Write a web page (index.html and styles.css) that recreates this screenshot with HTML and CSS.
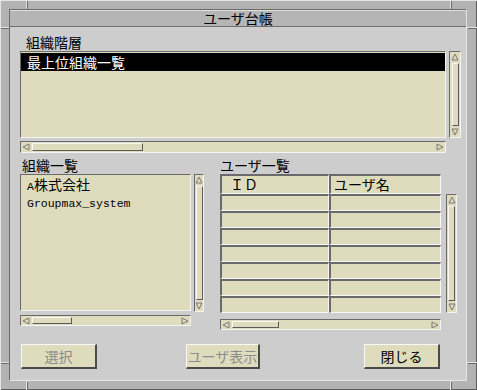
FILE: index.html
```html
<!DOCTYPE html>
<html lang="ja">
<head>
    <meta charset="UTF-8">
    <title>ユーザ台帳</title>
    <link rel="stylesheet" href="styles.css">
</head>
<body>
    <div class="window">
        <div class="notch n-top-l"></div>
        <div class="notch n-top-r"></div>
        <div class="notch n-bot-l"></div>
        <div class="notch n-bot-r"></div>
        <div class="notch n-left-t"></div>
        <div class="notch n-left-b"></div>
        <div class="notch n-right-t"></div>
        <div class="notch n-right-b"></div>
        <div class="inner">
            <div class="titlebar">ユーザ台帳</div>
            <div class="content">
                <!--組織階層-->
                <div class="label label-tree">組織階層</div>
                <div class="pane">
                    <div class="list list-tree">
                        <div class="item selected">最上位組織一覧</div>
                    </div>
                    <div class="vscroll vs-tree">
                        <svg class="arr up" viewBox="0 0 8 8"><path d="M4 1 L7 7 L1 7 Z"/></svg>
                        <div class="vthumb"></div>
                        <svg class="arr down" viewBox="0 0 8 8"><path d="M4 1 L7 7 L1 7 Z"/></svg>
                    </div>
                </div>
                <div class="hscroll hs-tree">
                    <svg class="arr left" viewBox="0 0 8 8"><path d="M4 1 L7 7 L1 7 Z"/></svg>
                    <div class="track"><div class="hthumb" style="width: 111px"></div></div>
                    <svg class="arr right" viewBox="0 0 8 8"><path d="M4 1 L7 7 L1 7 Z"/></svg>
                </div>

                <div class="columns">
                    <!--組織一覧-->
                    <div class="col col-org">
                        <div class="label label-org">組織一覧</div>
                        <div class="pane">
                            <div class="list list-org">
                                <div class="item"><span class="latin">A</span>株式会社</div>
                                <div class="item"><span class="latin">Groupmax_system</span></div>
                            </div>
                            <div class="vscroll vs-org">
                                <svg class="arr up" viewBox="0 0 8 8"><path d="M4 1 L7 7 L1 7 Z"/></svg>
                                <div class="vthumb"></div>
                                <svg class="arr down" viewBox="0 0 8 8"><path d="M4 1 L7 7 L1 7 Z"/></svg>
                            </div>
                        </div>
                        <div class="hscroll hs-org">
                            <svg class="arr left" viewBox="0 0 8 8"><path d="M4 1 L7 7 L1 7 Z"/></svg>
                            <div class="track"><div class="hthumb" style="width: 40px"></div></div>
                            <svg class="arr right" viewBox="0 0 8 8"><path d="M4 1 L7 7 L1 7 Z"/></svg>
                        </div>
                    </div>

                    <!--ユーザ一覧-->
                    <div class="col col-user">
                        <div class="label">ユーザ一覧</div>
                        <div class="pane">
                            <div class="table">
                                <div class="cell head c-id">ＩＤ</div>
                                <div class="cell head c-name">ユーザ名</div>
                                <div class="cell c-id"></div><div class="cell c-name"></div>
                                <div class="cell c-id"></div><div class="cell c-name"></div>
                                <div class="cell c-id"></div><div class="cell c-name"></div>
                                <div class="cell c-id"></div><div class="cell c-name"></div>
                                <div class="cell c-id"></div><div class="cell c-name"></div>
                                <div class="cell c-id"></div><div class="cell c-name"></div>
                                <div class="cell c-id"></div><div class="cell c-name"></div>
                            </div>
                            <div class="vscroll vs-user">
                                <svg class="arr up" viewBox="0 0 8 8"><path d="M4 1 L7 7 L1 7 Z"/></svg>
                                <div class="vthumb"></div>
                                <svg class="arr down" viewBox="0 0 8 8"><path d="M4 1 L7 7 L1 7 Z"/></svg>
                            </div>
                        </div>
                        <div class="hscroll hs-user">
                            <svg class="arr left" viewBox="0 0 8 8"><path d="M4 1 L7 7 L1 7 Z"/></svg>
                            <div class="track"><div class="hthumb" style="width: 47px"></div></div>
                            <svg class="arr right" viewBox="0 0 8 8"><path d="M4 1 L7 7 L1 7 Z"/></svg>
                        </div>
                    </div>
                </div>

                <div class="buttons">
                    <button class="btn btn-select" disabled>選択</button>
                    <button class="btn btn-user" disabled>ユーザ表示</button>
                    <button class="btn btn-close">閉じる</button>
                </div>
            </div>
        </div>
    </div>
</body>
</html>
```

FILE: styles.css
```css
*{
    box-sizing: border-box;
    margin: 0;
    padding: 0;
}
body{
    width: 477px;
    height: 390px;
    overflow: hidden;
    font-family: "Noto Sans CJK JP", sans-serif;
    font-size: 14px;
    color: #000;
}
/* ウィンドウ枠 */
.window{
    position: relative;
    width: 477px;
    height: 390px;
    background-color: #b3b3b3;
    padding: 9px 10px 9px 9px;
    box-shadow: inset 1px 1px 0 #e4e4e4, inset -1px -1px 0 #5c5c5c;
}
.notch{
    position: absolute;
    background-color: #e4e4e4;
    box-shadow: 1px 1px 0 #6a6a6a;
}
.n-top-l{ left: 26px; top: 0; width: 1px; height: 9px; }
.n-top-r{ left: 450px; top: 0; width: 1px; height: 9px; }
.n-bot-l{ left: 26px; bottom: 0; width: 1px; height: 9px; }
.n-bot-r{ left: 450px; bottom: 0; width: 1px; height: 9px; }
.n-left-t{ left: 0; top: 27px; width: 9px; height: 1px; }
.n-left-b{ left: 0; top: 362px; width: 9px; height: 1px; }
.n-right-t{ right: 0; top: 27px; width: 10px; height: 1px; }
.n-right-b{ right: 0; top: 362px; width: 10px; height: 1px; }
.inner{
    width: 100%;
    height: 100%;
    display: flex;
    flex-direction: column;
    border: 1px solid;
    border-color: #6a6a6a #e4e4e4 #e4e4e4 #6a6a6a;
}
.titlebar{
    height: 17px;
    background-color: #b5b5b5;
    border-top: 1px solid #e0e0e0;
    border-bottom: 1px solid #6e6e6e;
    text-align: center;
    line-height: 15px;
    font-size: 14px;
}
.content{
    flex: 1;
    background-color: #cdcdcd;
    padding: 8px 0 0 10px;
}
/* ラベル */
.label{
    height: 16px;
    line-height: 15px;
}
.label-tree{
    margin-left: 6px;
}
.label-org{
    margin-left: 2px;
}
.latin{
    font-family: "Liberation Mono", monospace;
    font-size: 11.5px;
}
/* リスト */
.pane{
    display: flex;
    align-items: flex-start;
}
.list{
    background-color: #dedcbd;
    border: 1px solid;
    border-color: #6a6a6a #f4f4f4 #f4f4f4 #6a6a6a;
    padding: 1px 0 0 0;
}
.list-tree{
    width: 426px;
    height: 87px;
}
.list-org{
    width: 171px;
    height: 137px;
}
.item{
    height: 17px;
    line-height: 17px;
    padding-left: 6px;
    white-space: nowrap;
}
.selected{
    background-color: #000;
    color: #fff;
    height: 18px;
    line-height: 18px;
}
/* スクロールバー */
.vscroll{
    background-color: #dedcbd;
    border: 1px solid;
    border-color: #6a6a6a #f4f4f4 #f4f4f4 #6a6a6a;
    display: flex;
    flex-direction: column;
    align-items: center;
    padding: 1px 0;
}
.vs-tree{
    width: 12px;
    height: 87px;
    margin-left: 3px;
}
.vs-org{
    width: 10px;
    height: 138px;
    margin-left: 3px;
}
.vs-user{
    width: 11px;
    height: 119px;
    margin-left: 5px;
    margin-top: 20px;
}
.vthumb{
    flex: 1;
    width: 7px;
    margin: 2px 0;
    border: 1px solid;
    border-color: #f8f8f8 #5a5a5a #5a5a5a #f8f8f8;
}
.hscroll{
    background-color: #dedcbd;
    border: 1px solid;
    border-color: #6a6a6a #f4f4f4 #f4f4f4 #6a6a6a;
    display: flex;
    align-items: center;
    padding: 0 1px;
    margin-top: 3px;
}
.hs-tree{
    width: 426px;
    height: 12px;
}
.hs-org{
    width: 171px;
    height: 11px;
}
.hs-user{
    width: 221px;
    height: 11px;
    margin-top: 6px;
}
.track{
    flex: 1;
    height: 100%;
    padding: 1px 2px;
}
.hthumb{
    height: 100%;
    border: 1px solid;
    border-color: #f8f8f8 #5a5a5a #5a5a5a #f8f8f8;
}
.arr{
    width: 8px;
    height: 8px;
    flex-shrink: 0;
}
.arr path{
    fill: none;
    stroke: #777;
    stroke-width: 1;
}
.down{ transform: rotate(180deg); }
.left{ transform: rotate(-90deg); }
.right{ transform: rotate(90deg); }
/* 下段 */
.columns{
    display: flex;
    margin-top: 5px;
}
.col-org{
    width: 184px;
}
.col-user{
    width: 237px;
    margin-left: 16px;
}
.table{
    width: 221px;
    height: 138px;
    display: grid;
    grid-template-columns: 109px 112px;
    grid-template-rows: 20px repeat(7, 17px);
    background-color: #dedcbd;
}
.cell{
    border-top: 2px solid #6a6a6a;
    border-left: 2px solid #6a6a6a;
    border-bottom: 1px solid #f8f8f8;
    border-right: 1px solid #f8f8f8;
    padding-left: 8px;
    line-height: 17px;
    white-space: nowrap;
}
.head.c-name{
    padding-left: 3px;
}
/* ボタン */
.buttons{
    display: flex;
    margin-top: 14px;
}
.btn{
    height: 25px;
    background-color: #dedcbd;
    border: 1px solid;
    border-color: #f8f8f8 #4a4a4a #4a4a4a #f8f8f8;
    border-right-width: 2px;
    border-bottom-width: 2px;
    font-family: "Noto Sans CJK JP", sans-serif;
    font-size: 14px;
    color: #000;
}
.btn:disabled{
    color: #8c8c8c;
}
.btn-select{
    width: 76px;
    margin-left: 1px;
}
.btn-user{
    width: 74px;
    margin-left: 89px;
}
.btn-close{
    width: 76px;
    margin-left: 104px;
}
```
